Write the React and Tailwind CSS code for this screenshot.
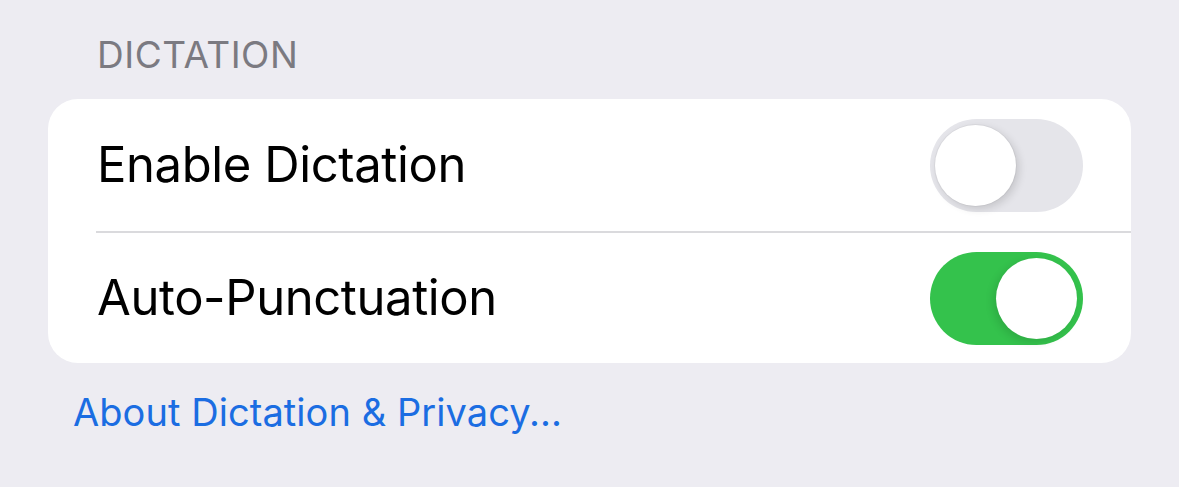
import React from "react";

function Toggle({ on }) {
  return (
    <div
      className={
        "relative w-[153px] h-[93px] rounded-full shrink-0 " +
        (on ? "bg-[#34c24c]" : "bg-[#e5e5ea]")
      }
    >
      <div
        className={
          "absolute top-[6px] w-[81px] h-[81px] rounded-full bg-white " +
          (on
            ? "left-[66px] shadow-[-3px_3px_8px_rgba(0,0,0,0.12)]"
            : "left-[5px] shadow-[0_0_0_1px_rgba(0,0,0,0.04),3px_3px_8px_rgba(0,0,0,0.14)]")
        }
      />
    </div>
  );
}

export default function App() {
  return (
    <div
      className="w-[1179px] h-[487px] bg-[#edecf2] overflow-hidden flex flex-col"
      style={{ fontFamily: "Inter, 'Noto Sans', sans-serif" }}
    >
      <div className="pl-[97px] pt-[33px] text-[37px] leading-[44px] text-[#7b7a81] tracking-[0.5px]">
        DICTATION
      </div>
      <div className="mx-[48px] mt-[22px] bg-white rounded-[30px] flex flex-col">
        <div className="h-[132px] flex items-center justify-between pl-[49px] pr-[48px]">
          <span className="text-[49px] text-black tracking-[-0.4px]">Enable Dictation</span>
          <Toggle on={false} />
        </div>
        <div className="ml-[48px] h-[2px] bg-[#dadadd]" />
        <div className="h-[130px] flex items-center justify-between pl-[49px] pr-[48px]">
          <span className="text-[49px] text-black tracking-[-0.4px]">Auto-Punctuation</span>
          <Toggle on={true} />
        </div>
      </div>
      <div className="pl-[73px] pt-[26px] text-[38px] leading-[46px] text-[#1b6de2] tracking-[0.06px]">
        About Dictation &amp; Privacy...
      </div>
    </div>
  );
}
